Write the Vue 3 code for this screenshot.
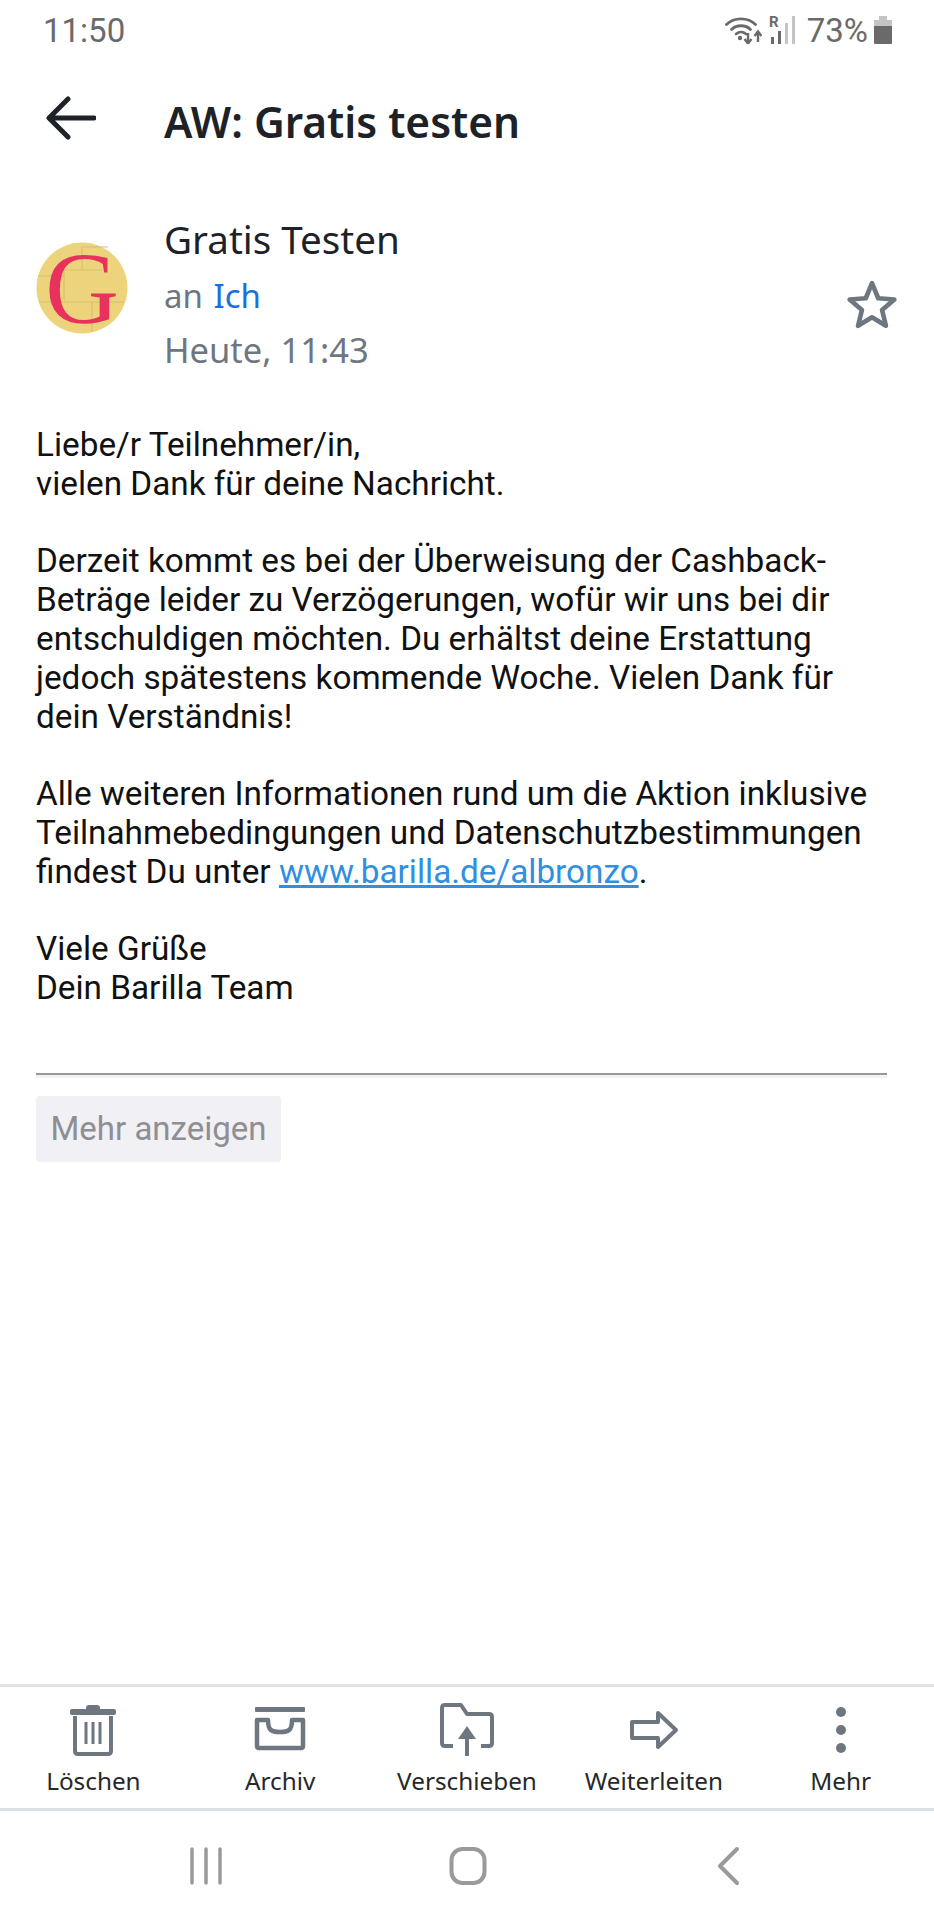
<template>
  <div class="screen">
    <div class="status-bar">
      <span class="clock">11:50</span>
      <div class="status-right">
        <svg class="wifi" width="37" height="28" viewBox="0 0 37 28" fill="none">
          <path d="M1.500 8.500C9 1 23 1 30.500 8.500" stroke="#6a6a6a" stroke-width="2.800" stroke-linecap="round" />
          <path d="M6.500 13.500C11.500 8.500 20.500 8.500 25.500 13.500" stroke="#6a6a6a" stroke-width="2.800" stroke-linecap="round" />
          <path d="M11 18C14 15.500 18 15.500 21 18" stroke="#6a6a6a" stroke-width="2.600" stroke-linecap="round" />
          <circle cx="15" cy="22" r="2.200" fill="#6a6a6a" />
          <path d="M23 17V27M19.500 23L23 27.500L26.500 23" stroke="#6a6a6a" stroke-width="2.400" />
          <path d="M33 26V16M29.500 20L33 15.500L36.500 20" stroke="#6a6a6a" stroke-width="2.400" />
        </svg>
        <svg class="signal" width="26" height="28" viewBox="0 0 26 28" fill="none">
          <text x="0" y="11" class="roaming">R</text>
          <rect x="2" y="21" width="3" height="7" fill="#6a6a6a" />
          <rect x="9" y="15" width="3" height="13" fill="#6a6a6a" />
          <rect x="16" y="7" width="3" height="21" fill="#c4c4c4" />
          <rect x="23" y="0" width="3" height="28" fill="#c4c4c4" />
        </svg>
        <span class="battery-text">73%</span>
        <svg class="battery" width="20" height="30" viewBox="0 0 20 30">
          <path d="M6 1H14V5H19V11H1V5H6Z" fill="#c4c4c4" />
          <path d="M1 11H19V28Q19 29 18 29H2Q1 29 1 28Z" fill="#6a6a6a" />
        </svg>
      </div>
    </div>

    <header class="head">
      <svg class="back" width="50" height="44" viewBox="0 0 50 44" fill="none">
        <path d="M48 22H4M22 3L3 22L22 41" stroke="#1d2228" stroke-width="5" stroke-linecap="round" stroke-linejoin="round" />
      </svg>
      <h1 class="subject">AW: Gratis testen</h1>
    </header>

    <section class="sender">
      <svg class="avatar" width="92" height="92" viewBox="0 0 92 92">
        <circle cx="46" cy="46" r="45.500" fill="#edd47c" />
        <path d="M72 5H46V28H28V34H2M46 28H66M28 34V58M3 60H88M56 60V90" fill="none" stroke="#d6bf70" stroke-width="1.200" />
        <text x="46" y="81" text-anchor="middle" class="avatar-letter">G</text>
      </svg>
      <div class="sender-info">
        <div class="sender-name">Gratis Testen</div>
        <div class="sender-to">an <span class="me">Ich</span></div>
        <div class="sender-date">Heute, 11:43</div>
      </div>
      <svg class="star" width="54" height="52" viewBox="0 0 52 50" fill="none">
        <path d="M26 4L32 18.500L47.500 19.700L35.700 29.800L39.400 45L26 36.800L12.600 45L16.300 29.800L4.500 19.700L20 18.500Z" stroke="#6e7780" stroke-width="4.500" stroke-linejoin="round" />
      </svg>
    </section>

    <main class="mail">
      <div class="mail-text">
        <p v-for="(block, i) in blocks" :key="i">
          <template v-for="(line, j) in block" :key="j">{{ line }}<br v-if="j < block.length - 1" /></template>
          <template v-if="i === 2"><a class="link">www.barilla.de/albronzo</a>.</template>
        </p>
      </div>
      <div class="rule"></div>
      <button class="more">Mehr anzeigen</button>
    </main>

    <nav class="toolbar">
      <div class="tool">
        <svg width="56" height="56" viewBox="0 0 56 56" fill="none">
          <path d="M21 6Q21 3 24 3H32Q35 3 35 6V8H21Z" fill="#6e7780" />
          <rect x="5" y="7" width="46" height="6" rx="2" fill="#6e7780" />
          <path d="M10 14V49Q10 52 13 52H43Q46 52 46 49V14" stroke="#6e7780" stroke-width="4" />
          <path d="M21 20V42M28 20V42M35 20V42" stroke="#6e7780" stroke-width="3" />
        </svg>
        <span>Löschen</span>
      </div>
      <div class="tool">
        <svg width="56" height="56" viewBox="0 0 56 56" fill="none">
          <rect x="3" y="5" width="50" height="5" rx="1" fill="#6e7780" />
          <path d="M5 18H16C16 28 19 30 28 30C37 30 40 28 40 18H51V44Q51 46 49 46H7Q5 46 5 44Z" stroke="#6e7780" stroke-width="4.500" stroke-linejoin="round" />
        </svg>
        <span>Archiv</span>
      </div>
      <div class="tool">
        <svg width="56" height="56" viewBox="0 0 56 56" fill="none">
          <path d="M14 44H6Q3 44 3 41V6Q3 3 6 3H22L28 12H50Q53 12 53 15V41Q53 44 50 44H42" stroke="#6e7780" stroke-width="4" stroke-linejoin="round" />
          <path d="M28 54V28" stroke="#6e7780" stroke-width="4" />
          <path d="M28 24L37 37H19Z" fill="#6e7780" />
        </svg>
        <span>Verschieben</span>
      </div>
      <div class="tool">
        <svg width="56" height="56" viewBox="0 0 56 56" fill="none">
          <path d="M6 20H32V11L50 28L32 45V36H6Z" stroke="#6e7780" stroke-width="4" stroke-linejoin="round" />
        </svg>
        <span>Weiterleiten</span>
      </div>
      <div class="tool">
        <svg width="56" height="56" viewBox="0 0 56 56" fill="#6e7780">
          <circle cx="28" cy="10" r="5" />
          <circle cx="28" cy="28" r="5" />
          <circle cx="28" cy="46" r="5" />
        </svg>
        <span>Mehr</span>
      </div>
    </nav>

    <div class="nav-bar">
      <svg width="34" height="40" viewBox="0 0 34 40" fill="none">
        <path d="M3 3V37M17 3V37M31 3V37" stroke="#9a9a9a" stroke-width="3.500" stroke-linecap="round" />
      </svg>
      <svg width="38" height="40" viewBox="0 0 38 40" fill="none">
        <rect x="2.500" y="3" width="33" height="34" rx="11" stroke="#9a9a9a" stroke-width="4" />
      </svg>
      <svg width="24" height="40" viewBox="0 0 24 40" fill="none">
        <path d="M21 3L4 20L21 37" stroke="#9a9a9a" stroke-width="4" stroke-linecap="round" stroke-linejoin="round" />
      </svg>
    </div>
  </div>
</template>

<script setup>
const blocks = [
  ["Liebe/r Teilnehmer/in,", "vielen Dank für deine Nachricht."],
  [
    "Derzeit kommt es bei der Überweisung der Cashback-",
    "Beträge leider zu Verzögerungen, wofür wir uns bei dir",
    "entschuldigen möchten. Du erhältst deine Erstattung",
    "jedoch spätestens kommende Woche. Vielen Dank für",
    "dein Verständnis!",
  ],
  [
    "Alle weiteren Informationen rund um die Aktion inklusive",
    "Teilnahmebedingungen und Datenschutzbestimmungen",
    "findest Du unter ",
  ],
  ["Viele Grüße", "Dein Barilla Team"],
];
</script>

<style>
html,
body {
  margin: 0;
  background: #fff;
}
</style>

<style scoped>
.screen {
  width: 934px;
  height: 1920px;
  display: flex;
  flex-direction: column;
  background: #fff;
  overflow: hidden;
  font-family: "Noto Sans", sans-serif;
}

.status-bar {
  height: 60px;
  flex-shrink: 0;
  display: flex;
  justify-content: space-between;
  align-items: center;
  padding: 0 41px 0 43px;
  font-family: Roboto, sans-serif;
  font-size: 33px;
  color: #6a6a6a;
}

.status-right {
  display: flex;
  align-items: center;
}

.wifi {
  margin-right: 7px;
}

.signal {
  margin-right: 12px;
  overflow: visible;
}

.roaming {
  font-family: Roboto, sans-serif;
  font-size: 15px;
  font-weight: 700;
  fill: #6a6a6a;
}

.battery {
  margin-left: 5px;
}

.head {
  height: 122px;
  flex-shrink: 0;
  display: flex;
  align-items: center;
  padding-left: 46px;
}

.back {
  margin-top: -6px;
}

.subject {
  margin: 0 0 0 68px;
  font-size: 42.400px;
  font-weight: 600;
  color: #1d2228;
}

.sender {
  display: flex;
  align-items: center;
  padding: 32px 36px 0;
  height: 162px;
  flex-shrink: 0;
}

.avatar {
  flex-shrink: 0;
  margin-bottom: 14px;
  overflow: visible;
}

.avatar-letter {
  font-family: "Liberation Serif", serif;
  font-size: 102px;
  fill: #e8315c;
}

.sender-info {
  flex: 1;
  margin-left: 36px;
  color: #6e7780;
}

.sender-name {
  font-size: 38.600px;
  line-height: 52px;
  margin-bottom: 4px;
  color: #1d2228;
}

.sender-to {
  line-height: 54px;
  font-size: 33px;
}

.me {
  margin-left: 2px;
  color: #1a6fe0;
}

.sender-date {
  line-height: 54px;
  font-size: 34.500px;
}

.star {
  flex-shrink: 0;
  margin-top: 20px;
  margin-right: -1px;
}

.mail {
  flex: 1;
  padding: 50px 47px 0 36px;
  font-family: Roboto, sans-serif;
  font-size: 33.300px;
  line-height: 38.800px;
  color: #111;
}

.mail-text p {
  margin: 0 0 38.800px;
}

.link {
  color: #2f8fe0;
  text-decoration: underline;
}

.rule {
  margin-top: 65px;
  height: 2px;
  background: #999;
  border-bottom: 3px solid #f2f2f2;
}

.more {
  display: block;
  margin-top: 18px;
  width: 245px;
  height: 66px;
  border: none;
  border-radius: 4px;
  background: #f0f0f5;
  color: #8e8e93;
  font-family: Roboto, sans-serif;
  font-size: 33px;
  padding: 0;
}

.toolbar {
  height: 127px;
  flex-shrink: 0;
  box-sizing: border-box;
  display: grid;
  grid-template-columns: repeat(5, 1fr);
  border-top: 3px solid #e1e4e6;
  border-bottom: 3px solid #dcdfe3;
}

.tool {
  display: flex;
  flex-direction: column;
  align-items: center;
  padding-top: 15px;
  gap: 6px;
  font-size: 24.300px;
  line-height: 33px;
  color: #26282a;
}

.nav-bar {
  height: 109px;
  flex-shrink: 0;
  display: flex;
  align-items: flex-start;
  padding: 35px 0 0 189px;
  box-sizing: border-box;
}

.nav-bar svg:nth-child(1) {
  margin-right: 226px;
}

.nav-bar svg:nth-child(2) {
  margin-right: 229px;
}
</style>
